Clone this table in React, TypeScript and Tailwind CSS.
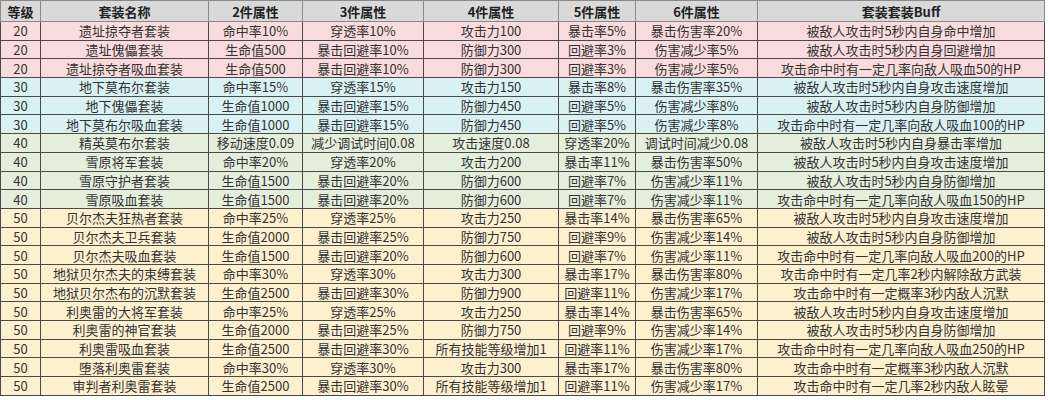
const header = ["等级", "套装名称", "2件属性", "3件属性", "4件属性", "5件属性", "6件属性", "套装套装Buff"];
const widths = ["w-[40px]", "w-[168px]", "w-[94px]", "w-[121px]", "w-[135px]", "w-[77px]", "w-[122px]", "w-[287px]"];

const rows = [
  ["20", "遗址掠夺者套装", "命中率10%", "穿透率10%", "攻击力100", "暴击率5%", "暴击伤害率20%", "被敌人攻击时5秒内自身命中增加"],
  ["20", "遗址傀儡套装", "生命值500", "暴击回避率10%", "防御力300", "回避率3%", "伤害减少率5%", "被敌人攻击时5秒内自身回避增加"],
  ["20", "遗址掠夺者吸血套装", "生命值500", "暴击回避率10%", "防御力300", "回避率3%", "伤害减少率5%", "攻击命中时有一定几率向敌人吸血50的HP"],
  ["30", "地下莫布尔套装", "命中率15%", "穿透率15%", "攻击力150", "暴击率8%", "暴击伤害率35%", "被敌人攻击时5秒内自身攻击速度增加"],
  ["30", "地下傀儡套装", "生命值1000", "暴击回避率15%", "防御力450", "回避率5%", "伤害减少率8%", "被敌人攻击时5秒内自身防御增加"],
  ["30", "地下莫布尔吸血套装", "生命值1000", "暴击回避率15%", "防御力450", "回避率5%", "伤害减少率8%", "攻击命中时有一定几率向敌人吸血100的HP"],
  ["40", "精英莫布尔套装", "移动速度0.09", "减少调试时间0.08", "攻击速度0.08", "穿透率20%", "调试时间减少0.08", "被敌人攻击时5秒内自身暴击率增加"],
  ["40", "雪原将军套装", "命中率20%", "穿透率20%", "攻击力200", "暴击率11%", "暴击伤害率50%", "被敌人攻击时5秒内自身攻击速度增加"],
  ["40", "雪原守护者套装", "生命值1500", "暴击回避率20%", "防御力600", "回避率7%", "伤害减少率11%", "被敌人攻击时5秒内自身防御增加"],
  ["40", "雪原吸血套装", "生命值1500", "暴击回避率20%", "防御力600", "回避率7%", "伤害减少率11%", "攻击命中时有一定几率向敌人吸血150的HP"],
  ["50", "贝尔杰夫狂热者套装", "命中率25%", "穿透率25%", "攻击力250", "暴击率14%", "暴击伤害率65%", "被敌人攻击时5秒内自身攻击速度增加"],
  ["50", "贝尔杰夫卫兵套装", "生命值2000", "暴击回避率25%", "防御力750", "回避率9%", "伤害减少率14%", "被敌人攻击时5秒内自身防御增加"],
  ["50", "贝尔杰夫吸血套装", "生命值1500", "暴击回避率20%", "防御力600", "回避率7%", "伤害减少率11%", "攻击命中时有一定几率向敌人吸血200的HP"],
  ["50", "地狱贝尔杰夫的束缚套装", "命中率30%", "穿透率30%", "攻击力300", "暴击率17%", "暴击伤害率80%", "攻击命中时有一定几率2秒内解除敌方武装"],
  ["50", "地狱贝尔杰布的沉默套装", "生命值2500", "暴击回避率30%", "防御力900", "回避率11%", "伤害减少率17%", "攻击命中时有一定概率3秒内敌人沉默"],
  ["50", "利奥雷的大将军套装", "命中率25%", "穿透率25%", "攻击力250", "暴击率14%", "暴击伤害率65%", "被敌人攻击时5秒内自身攻击速度增加"],
  ["50", "利奥雷的神官套装", "生命值2000", "暴击回避率25%", "防御力750", "回避率9%", "伤害减少率14%", "被敌人攻击时5秒内自身防御增加"],
  ["50", "利奥雷吸血套装", "生命值2500", "暴击回避率30%", "所有技能等级增加1", "回避率11%", "伤害减少率17%", "攻击命中时有一定几率向敌人吸血250的HP"],
  ["50", "堕落利奥雷套装", "命中率30%", "穿透率30%", "攻击力300", "暴击率17%", "暴击伤害率80%", "攻击命中时有一定概率3秒内敌人沉默"],
  ["50", "审判者利奥雷套装", "生命值2500", "暴击回避率30%", "所有技能等级增加1", "回避率11%", "伤害减少率17%", "攻击命中时有一定几率2秒内敌人眩晕"],
];

const tint: Record<string, string> = {
  "20": "bg-[#f9dadd]",
  "30": "bg-[#d9f1f0]",
  "40": "bg-[#e3eedb]",
  "50": "bg-[#fdf0cf]",
};

export default function App() {
  return (
    <div className="h-[400px] w-[1048px] overflow-hidden bg-white font-['Noto_Sans_CJK_SC','Noto_Sans',sans-serif] text-[13px] text-[#333]">
      <table className="w-[1044px] table-fixed border-collapse">
        <colgroup>{widths.map((w) => <col key={w} className={w} />)}</colgroup>
        <thead>
          <tr className="h-[21px] bg-[#d9d9d9]">
            {header.map((h) => <th key={h} className="border border-[#8a8a8a] p-0 text-center font-bold leading-none text-[#222]">{h}</th>)}
          </tr>
        </thead>
        <tbody>
          {rows.map((row, i) => (
            <tr key={i} className={`h-[18.7px] ${tint[row[0]]}`}>
              {row.map((cell, j) => <td key={j} className="overflow-hidden whitespace-nowrap border border-[#4a4a4a] p-0 text-center leading-none">{cell}</td>)}
            </tr>
          ))}
        </tbody>
      </table>
    </div>
  );
}
